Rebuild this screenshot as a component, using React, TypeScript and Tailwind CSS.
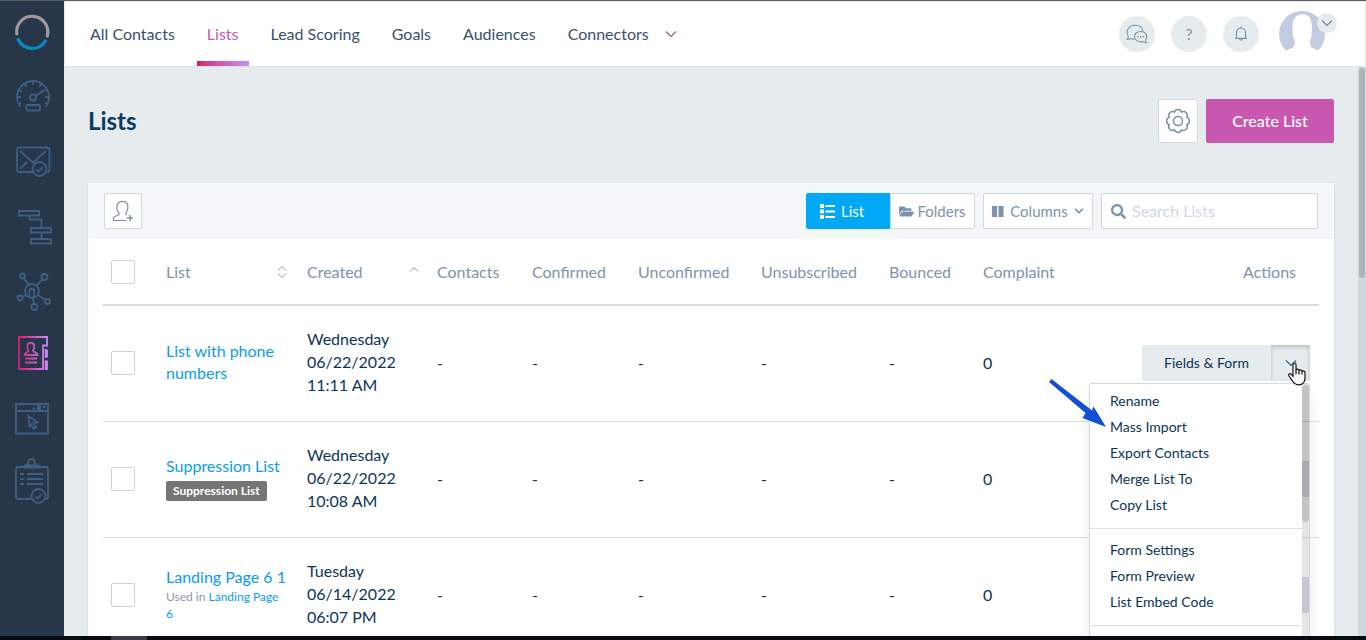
import { useState, type ReactNode } from "react";
import clsx from "clsx";
import { FaChevronDown, FaFolderOpen, FaSearch } from "react-icons/fa";

const NAV = ["All Contacts", "Lists", "Lead Scoring", "Goals", "Audiences"];

const COUNTERS = ["Contacts", "Confirmed", "Unconfirmed", "Unsubscribed", "Bounced"];

const MENU = [
  ["Rename", "Mass Import", "Export Contacts", "Merge List To", "Copy List"],
  ["Form Settings", "Form Preview", "List Embed Code"],
];

type Row = {
  name: string;
  tag?: string;
  usedIn?: string;
  created: string[];
};

const ROWS: Row[] = [
  { name: "List with phone numbers", created: ["Wednesday", "06/22/2022", "11:11 AM"] },
  { name: "Suppression List", tag: "Suppression List", created: ["Wednesday", "06/22/2022", "10:08 AM"] },
  { name: "Landing Page 6 1", usedIn: "Landing Page 6", created: ["Tuesday", "06/14/2022", "06:07 PM"] },
];

const SIDEBAR: { label: string; icon: ReactNode }[] = [
  {
    label: "Dashboard",
    icon: (
      <>
        <path d="M20.5 42A16 16 0 1 1 45.5 42" />
        <path d="M33 17v3M25 19l1.5 3M19 25l3 2M17 32h4M18 39l3-1M41 19l-1.5 3M47 25l-2 1M49 32h-4M48 39l-3-1" />
        <circle cx="33" cy="32.5" r="3" />
        <path d="M35.5 31L44.5 25" />
        <rect x="26.5" y="40" width="13.5" height="5.5" rx="1" />
      </>
    ),
  },
  {
    label: "Messages",
    icon: (
      <>
        <path d="M33 43H19.5a2.5 2.5 0 0 1-2.5-2.5V21a2.5 2.5 0 0 1 2.5-2.5H47a2.5 2.5 0 0 1 2.5 2.5v19.5a2.5 2.5 0 0 1-2 2.5" />
        <path d="M20 22l13 11.5L46 22M20 39.5l7-6.5" />
        <circle cx="39.5" cy="40" r="7" />
        <path d="M36.5 40.5l2 2 4-4" />
      </>
    ),
  },
  {
    label: "Automations",
    icon: (
      <>
        <path d="M19 18h20v4.5H19zM31 35h20v4.5H31zM31 46h20v4.5H31z" />
        <path d="M29.5 23v3.5h12V35M41.5 40v6" />
      </>
    ),
  },
  {
    label: "Network",
    icon: (
      <>
        <circle cx="32" cy="34" r="7" />
        <path d="M29.5 40v-4a2.5 3 0 1 1 4.5 0v4M29.5 34a2.3 2.3 0 1 1 4.6 0" />
        <circle cx="22.5" cy="19" r="2.5" />
        <circle cx="44.5" cy="20" r="3" />
        <circle cx="20" cy="41" r="2.5" />
        <circle cx="47.5" cy="44.5" r="2.5" />
        <circle cx="34.5" cy="50" r="3" />
        <path d="M24 21.5l4.5 6.5M42.5 22.5l-6 6M22.5 40l4-2.5M38 38l7.5 5M33 41l1 6" />
      </>
    ),
  },
  {
    label: "Contacts",
    icon: (
      <>
        <path d="M19 16h28v8.5h-4V48H19z" />
        <path d="M47 28.5v8M47 39.5V49M45.5 28v9M45.5 39.5V49" />
        <path d="M28.5 29.5c-1.5-2-1.5-4-1-5.5 1-3 5.5-3 6.5 0 .5 1.500.5 3.500-1 5.500 0 2 4.500 1.500 4.500 4.500H24.500c0-3 4-2.500 4-4.500z" />
        <path d="M25 37.5h12M25 41.5h12" />
      </>
    ),
  },
  {
    label: "Landing pages",
    icon: (
      <>
        <path d="M16 19h32v29.5H16zM16 26h32" />
        <path d="M32.5 23.5h3M43 22h2.5" />
        <path d="M39 20v5" strokeWidth="4" />
        <path d="M28.5 31l9 6.5-4 .5 2.5 4.5-2.5 1-2-4-2 2z" />
      </>
    ),
  },
  {
    label: "Surveys",
    icon: (
      <>
        <path d="M31 50H18.5a2.5 2.5 0 0 1-2.5-2.5v-27a2.5 2.5 0 0 1 2.5-2.5h27a2.5 2.5 0 0 1 2.5 2.5v27a2.5 2.5 0 0 1-2.5 2.5" />
        <circle cx="31.5" cy="13.5" r="3.5" />
        <path d="M24 17.5h15.5" strokeWidth="4" />
        <path d="M20 25h4M20 30h4M20 35h4M27 25h16.5M27 30h16.5M27 35h16.5" />
        <circle cx="38.5" cy="47" r="7" />
        <path d="M35.5 47.5l2 2 4-4" />
      </>
    ),
  },
];

function Sidebar() {
  return (
    <aside className="flex w-16 shrink-0 flex-col bg-[#273649]">
      <a href="#home" aria-label="Home">
        <svg viewBox="0 0 64 64" className="size-16" fill="none" strokeWidth="3.2" strokeLinecap="round">
          <path d="M16.8 33A15.6 15.6 0 1 1 47.3 35" stroke="#9b9b9b" />
          <path d="M18.2 38.5A15.6 15.6 0 0 0 45.5 40" stroke="#0a8ac6" />
        </svg>
      </a>
      {SIDEBAR.map((item) => {
        const active = item.label === "Contacts";
        return (
          <a key={item.label} href="#menu" aria-label={item.label}>
            <svg
              viewBox="0 0 64 64"
              className="size-16"
              fill="none"
              stroke={active ? "url(#active-icon)" : "#3e5f80"}
              strokeWidth="1.8"
            >
              {active && (
                <defs>
                  <linearGradient id="active-icon" gradientUnits="userSpaceOnUse" x1="18" y1="0" x2="48" y2="0">
                    <stop stopColor="#d0206e" />
                    <stop offset="1" stopColor="#c48cfb" />
                  </linearGradient>
                </defs>
              )}
              {item.icon}
            </svg>
          </a>
        );
      })}
    </aside>
  );
}

function RoundButton({ label, children }: { label: string; children: ReactNode }) {
  return (
    <button aria-label={label} className="flex size-9 items-center justify-center rounded-full bg-[#e6ebed] text-[#7d95ab]">
      {children}
    </button>
  );
}

function Chevron({ className }: { className?: string }) {
  return (
    <svg viewBox="0 0 12 8" className={clsx("h-2 w-3", className)} fill="none" stroke="currentColor" strokeWidth="1.2">
      <path d="M1 1.5l5 5 5-5" />
    </svg>
  );
}

function Header() {
  return (
    <header className="flex h-[66px] shrink-0 items-center justify-between border border-[#e8e8ea] border-b-[#dfe4e8] bg-white pr-7 pl-[15px]">
      <nav className="flex h-full gap-3 pb-px text-base text-[#3a506a]">
        {NAV.map((item) => (
          <a
            key={item}
            href="#nav"
            className={clsx("relative flex items-center px-[10px]", item === "Lists" && "text-[#c95bb4]")}
          >
            {item}
            {item === "Lists" && (
              <span className="absolute inset-x-0 -bottom-px h-[5px] bg-linear-to-r from-[#cc1f6f] to-[#c48cfb]" />
            )}
          </a>
        ))}
        <a href="#nav" className="flex items-center gap-4 px-[10px]">
          Connectors
          <Chevron className="text-[#a85c6c]" />
        </a>
      </nav>
      <div className="flex items-center gap-4">
        <RoundButton label="Chat">
          <svg viewBox="0 0 22 20" className="h-5 w-[22px]" fill="none" stroke="currentColor" strokeWidth="1.1">
            <path d="M8.5 15c-1.5.2-3 0-4-.5-1 .6-2 .8-3.5.8 1-1 1.3-1.7 1.4-2.8C-.5 8 1.5 1.5 9 1.2c5 0 7.5 3 8 6" />
            <path d="M14.5 7.5c-3.5 0-6 2.3-6 5.2 0 3.5 4 6 8.2 4.9 1 .7 2.300 1 3.800 1-.7-.8-1-1.500-1-2.600 2.800-4 .5-8.500-5-8.500z" />
            <path d="M11.5 12.7h1.2M14 12.7h1.2M16.5 12.7h1.2" strokeWidth="1.5" />
          </svg>
        </RoundButton>
        <RoundButton label="Help">
          <span className="text-base">?</span>
        </RoundButton>
        <RoundButton label="Notifications">
          <svg viewBox="0 0 14 16" className="h-4 w-[14px]" fill="none" stroke="currentColor" strokeWidth="1.2">
            <path d="M2.5 12V6.5a4.5 4.5 0 0 1 9 0V12M1 12.3h12M5.5 12.5a1.5 1.5 0 0 0 3 0M7 .5V2" />
          </svg>
        </RoundButton>
        <button aria-label="Account" className="relative ml-1 pr-3">
          <svg viewBox="0 0 46 46" className="size-[46px]">
            <path
              d="M7 39.5A23 23 0 1 1 39 39.5c-2-1.5-6-2-7-4-1-2.2-1.3-5-.5-7.5 1.5-1.5 1-5 1.3-8C33.3 9 31 3 23 3.2 15.5 4 13 9 13.5 20c.3 3 .3 6.500 1.800 8 .8 2.500.7 5.300-.3 7.500-1 2-6 2.500-8 4z"
              fill="#c2cce1"
            />
          </svg>
          <span className="absolute top-[2px] right-0 flex size-5 items-center justify-center rounded-full bg-[#e6ebed] text-[#7088a2]">
            <Chevron />
          </span>
        </button>
      </div>
    </header>
  );
}

function Toolbar() {
  const [view, setView] = useState("List");
  const box = "flex h-9 items-center rounded-xs border border-[#cfd7e0] bg-white text-[#7d93ab]";
  const on = "border-[#00a8f5] bg-[#00a8f5] text-white";
  const off = "border-[#cfd7e0] bg-white text-[#7d93ab]";
  return (
    <div className="flex items-center gap-2 rounded-t-xs bg-[#f4f7f8] px-4 py-[10px] text-[15px]">
      <button aria-label="Add contact" className={clsx(box, "mr-auto w-[38px] justify-center")}>
        <svg viewBox="0 0 22 22" className="size-[22px]" fill="none" stroke="currentColor" strokeWidth="1.2">
          <path d="M14.5 20.5H1.5c-.5-4 1-4 4-5 1.5-.5 2-1.5 1.5-2.5C4.5 10 4.5 6.5 5.5 4c1.500-3.500 8.500-3.500 9.800 0 .9 2.500.6 6-1.300 9-.5 1 0 1.500 1 2" />
          <path d="M18 15v6M15 18h6" strokeWidth="1.6" />
        </svg>
      </button>
      <div className="flex">
        <button
          onClick={() => setView("List")}
          className={clsx("flex h-9 w-[84px] items-center gap-[6px] rounded-l-xs border pl-[13px]", view === "List" ? on : off)}
        >
          <svg viewBox="0 0 15 15" className="size-[15px]" fill="currentColor">
            <path d="M0 0h4v4H0zM0 5.5h4v4H0zM0 11h4v4H0zM5.5 1H15v2H5.500zM5.500 6.500H15v2H5.500zM5.500 12H15v2H5.500z" />
          </svg>
          List
        </button>
        <button
          onClick={() => setView("Folders")}
          className={clsx("flex h-9 w-[85px] items-center justify-center gap-[3px] rounded-r-xs border", view === "Folders" ? on : off)}
        >
          <FaFolderOpen size={15} />
          Folders
        </button>
      </div>
      <button className={clsx(box, "w-[110px] justify-between px-2")}>
        <svg viewBox="0 0 12 11" className="h-[11px] w-3" fill="currentColor">
          <path d="M0 0h5v11H0zM6.5 0h5v11h-5z" />
        </svg>
        Columns
        <FaChevronDown size={10} />
      </button>
      <label className={clsx(box, "w-[217px] gap-[6px] px-[9px]")}>
        <FaSearch size={15} className="shrink-0" />
        <input
          aria-label="Search Lists"
          placeholder="Search Lists"
          className="w-full min-w-0 text-base outline-none placeholder:text-[#cfd8e2]"
        />
      </label>
    </div>
  );
}

function Check({ label }: { label: string }) {
  return (
    <input
      type="checkbox"
      aria-label={label}
      className="block size-6 appearance-none rounded-xs border border-[#ccd4de] bg-white checked:bg-[#00a8f5]"
    />
  );
}

function ActionsMenu() {
  return (
    <div className="absolute top-[38px] right-0 flex h-[300px] w-[221px] rounded-xs border border-[#d5d8dc] text-left shadow-lg">
      <ul className="flex-1 overflow-hidden bg-white py-1 text-[#0c3556]">
        {MENU.map((group) => (
          <li key={group[0]}>
            {group.map((item) => (
              <button key={item} className="block h-[26px] w-full pl-5 text-left text-sm">
                {item}
              </button>
            ))}
            <hr className="mt-[10px] mb-2 border-[#dcdfe3]" />
          </li>
        ))}
      </ul>
      <div className="w-[7px] bg-black/10">
        <div className="mt-[1px] h-[137px] rounded-full bg-black/15" />
      </div>
    </div>
  );
}

function RowActions({ open }: { open: boolean }) {
  return (
    <div className={clsx("relative ml-auto flex h-9 w-[168px] text-sm text-[#0c3556]", open && "z-10")}>
      <button aria-label="Fields & Form" className="flex-1 rounded-l-xs bg-[#e6ebed]">
        {open && <>Fields &amp; Form</>}
      </button>
      <button
        aria-label="More actions"
        className={clsx(
          "flex w-[39px] items-center justify-center rounded-r-xs",
          open ? "bg-[#e6ebed] inset-shadow-sm inset-shadow-black/20" : "bg-[#dbe0e9]",
        )}
      >
        <Chevron className="text-[#31669a]" />
      </button>
      {open && (
        <>
          <ActionsMenu />
          <svg viewBox="0 0 60 50" className="absolute top-[33px] -left-[94px] h-[50px] w-[60px]">
            <path d="M3.5 1L1 4l36.5 31-3 5L58 49 45.500 28.500l-1.500 4z" fill="#1350d8" />
          </svg>
          <svg
            viewBox="0 0 20 24"
            className="absolute top-[17px] right-[3px] h-6 w-5"
            fill="#fff"
            stroke="#111"
            strokeWidth="1.2"
            strokeLinejoin="round"
          >
            <path d="M6 14.5v-12C6 .5 9 .5 9 2.500V8c.5-1.500 3-1.200 3 .5.700-1 2.800-.8 3 .8 1-.8 3-.3 3 1.500v5c0 4-2 7-6.500 7-3.500 0-5-2-6.500-4.500L2 14c-1-1.500.8-3 2-2z" />
            <path d="M9 8v4.5M12 8.5v4M15 9.5v3" fill="none" />
          </svg>
        </>
      )}
    </div>
  );
}

function ListsTable() {
  return (
    <div className="px-[15px]">
      <table className="w-full table-fixed text-left">
        <colgroup>
          <col className="w-[55px]" />
          <col className="w-[141px]" />
          <col className="w-[130px]" />
          <col className="w-[95px]" />
          <col className="w-[106px]" />
          <col className="w-[123px]" />
          <col className="w-[128px]" />
          <col className="w-[94px]" />
          <col className="w-[96px]" />
          <col />
        </colgroup>
        <thead>
          <tr className="h-[66px] border-b-2 border-[#d9dbdd] text-base text-[#7d93ab] [&>th]:px-2 [&>th]:font-normal">
            <th>
              <Check label="Select all" />
            </th>
            <th>
              <div className="flex items-center justify-between">
                List
                <svg viewBox="0 0 10 12" className="mr-1 h-3 w-[10px]" fill="none" stroke="currentColor">
                  <path d="M1 4.5l4-4 4 4M1 7.5l4 4 4-4" />
                </svg>
              </div>
            </th>
            <th>
              <div className="flex items-center justify-between">
                Created
                <svg viewBox="0 0 10 12" className="mr-[2px] h-3 w-[10px]" fill="none" stroke="currentColor">
                  <path d="M1 5.5l4-4 4 4" />
                </svg>
              </div>
            </th>
            {COUNTERS.map((name) => (
              <th key={name}>{name}</th>
            ))}
            <th>Complaint</th>
            <th>
              <div className="pr-[15px] text-right">Actions</div>
            </th>
          </tr>
        </thead>
        <tbody>
          {ROWS.map((row, i) => (
            <tr key={row.name} className="h-[116px] border-b border-[#d9dbdd] text-base text-[#0c3556]">
              <td className="px-2">
                <Check label={row.name} />
              </td>
              <td className="px-2 pb-[2px] leading-[22px]">
                <a href="#list" className="text-[#0b9cec]">
                  {row.name}
                </a>
                {row.tag && (
                  <div className="mt-1 w-max rounded-xs bg-[#757575] px-[7px] text-xs leading-5 font-bold text-white">
                    {row.tag}
                  </div>
                )}
                {row.usedIn && (
                  <div className="max-w-[118px] text-xs leading-[17px] text-[#8696a8]">
                    Used in{" "}
                    <a href="#page" className="text-[#0b9cec]">
                      {row.usedIn}
                    </a>
                  </div>
                )}
              </td>
              <td className="px-2 pb-1 leading-[23px]">
                {row.created.map((line) => (
                  <div key={line}>{line}</div>
                ))}
              </td>
              {COUNTERS.map((name) => (
                <td key={name} className="px-2">
                  -
                </td>
              ))}
              <td className="px-2">0</td>
              <td className="pr-[9px]">
                <RowActions open={i === 0} />
              </td>
            </tr>
          ))}
        </tbody>
      </table>
    </div>
  );
}

export default function App() {
  return (
    <div className="flex h-screen flex-col overflow-hidden border-t border-[#5f5d63] font-['Lato',sans-serif]">
      <div className="flex min-h-0 flex-1">
        <Sidebar />
        <div className="flex min-w-0 flex-1 flex-col">
          <Header />
          <div className="flex min-h-0 flex-1">
            <main className="min-w-0 flex-1 overflow-hidden bg-[#e6ebee] px-6 pt-8">
              <div className="flex items-center justify-between">
                <h1 className="text-2xl font-bold text-[#0c3b62]">Lists</h1>
                <div className="flex gap-2">
                  <button
                    aria-label="Settings"
                    className="flex h-11 w-10 items-center justify-center rounded-xs border border-[#cfd7e0] bg-white"
                  >
                    <svg viewBox="0 0 26 26" className="size-[26px]" fill="none" stroke="#7890a8" strokeWidth="1.5" strokeLinejoin="round">
                      <path d="M9.4 4.2a3.8 3.8 0 0 1 7.200 0a3.8 3.8 0 0 1 5.200 5.200a3.8 3.8 0 0 1 0 7.200a3.8 3.8 0 0 1-5.200 5.200a3.8 3.8 0 0 1-7.200 0a3.8 3.8 0 0 1-5.200-5.200a3.8 3.8 0 0 1 0-7.200a3.8 3.8 0 0 1 5.200-5.200z" />
                      <circle cx="13" cy="13" r="4.5" />
                    </svg>
                  </button>
                  <button className="h-11 w-32 rounded-xs bg-[#c857b0] text-base font-medium text-white">Create List</button>
                </div>
              </div>
              <section className="mt-10 rounded-xs bg-white shadow-sm">
                <Toolbar />
                <ListsTable />
              </section>
            </main>
            <div className="w-2 bg-[#d0d6de]">
              <div className="mx-[1px] mt-[1px] h-[210px] rounded-full bg-[#b0b4b9]" />
            </div>
          </div>
        </div>
      </div>
      <footer className="h-1 shrink-0 bg-[#080b10] pl-[111px]">
        <div className="h-full w-9 bg-[#3a3d42]" />
      </footer>
    </div>
  );
}
